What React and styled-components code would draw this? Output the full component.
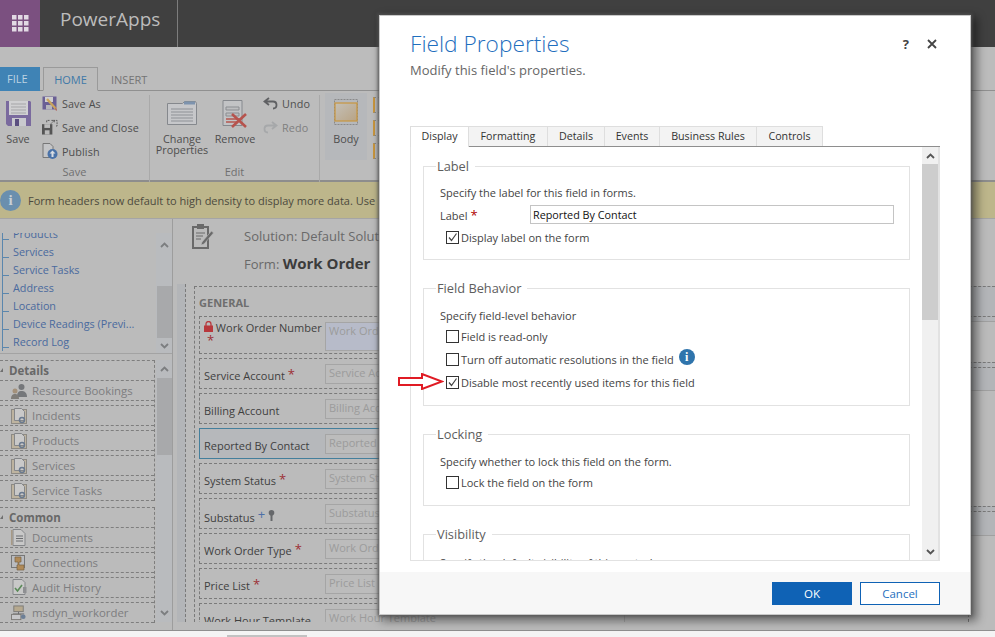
import React from "react";
import styled, { createGlobalStyle } from "styled-components";

const FONT = `"Open Sans", "Noto Sans", "Liberation Sans", sans-serif`;

const GlobalStyle = createGlobalStyle`
  html, body { margin: 0; padding: 0; height: 100%; overflow: hidden; background: #f4f4f4; }
  body { font-family: ${FONT}; }
  * { box-sizing: border-box; }
`;

/* ---------- icons ---------- */
const WaffleIcon = () => (
  <svg width="17" height="17" viewBox="0 0 17 17" fill="#e2d9e4">
    {[0, 6, 12].map((y) =>
      [0, 6, 12].map((x) => <rect key={`${x}-${y}`} x={x} y={y} width="4.5" height="4.5" />)
    )}
  </svg>
);
const SaveIcon = () => (
  <svg width="27" height="27" viewBox="0 0 27 27">
    <path d="M1 1h24l1 1v24H3l-2-2z" fill="#7a6a9e" />
    <rect x="4" y="1" width="19" height="14" fill="#d0d0d2" />
    <path d="M6 4h15M6 7h15M6 10h15M6 13h15" stroke="#a5a5a8" />
    <rect x="7" y="18" width="14" height="8" fill="#c9c9ce" />
    <rect x="10" y="19" width="4" height="7" fill="#5b4f80" />
  </svg>
);
const SaveAsIcon = () => (
  <svg width="16" height="15" viewBox="0 0 16 15">
    <rect x="0.5" y="0.5" width="14" height="13" fill="#6a5f95" />
    <rect x="3" y="1" width="8" height="5" fill="#cfcfcf" />
    <rect x="4" y="9" width="6" height="4.5" fill="#b5b5bb" />
    <path d="M5 3l9 10" stroke="#c9a35e" strokeWidth="2.4" />
    <path d="M13 11l2 3-1 1z" fill="#b0524c" />
  </svg>
);
const SaveCloseIcon = () => (
  <svg width="17" height="16" viewBox="0 0 17 16">
    <path d="M0 5h11v11H0z" fill="#555" />
    <rect x="2.5" y="5" width="6" height="4" fill="#bbb" />
    <rect x="3" y="11.5" width="5" height="4.5" fill="#bbb" />
    <path d="M5 3V1h3M12 1h4v6h-2M9.5 4.5l3-3M10 1h3v3" fill="none" stroke="#555" strokeDasharray="2 1" />
  </svg>
);
const PublishIcon = () => (
  <svg width="16" height="16" viewBox="0 0 16 16">
    <path d="M1 .5h7l3 3v11H1z" fill="#c4c5c7" stroke="#777" />
    <circle cx="10.5" cy="11" r="5" fill="#4a72a8" />
    <path d="M10.5 7.5l3 3h-2V14h-2v-3.500h-2z" fill="#d9dde2" />
  </svg>
);
const ChangeIcon = () => (
  <svg width="30" height="26" viewBox="0 0 30 26">
    <path d="M.5 3.500h15l2-2h11l1 2v21H.5z" fill="#c6c7ca" stroke="#85888d" />
    <rect x="17" y="1.500" width="11" height="3" fill="#7d93ae" />
    <path d="M4 9h22M4 12h22M4 15h22M4 18h22M4 21h22" stroke="#8e9196" />
  </svg>
);
const RemoveIcon = () => (
  <svg width="26" height="28" viewBox="0 0 26 28">
    <path d="M1 .5h19v25H1z" fill="#c2c3c5" stroke="#85888d" />
    <path d="M4 7h13v3H4zM4 13h13v3H4z" fill="#bdbec0" stroke="#8b8d91" />
    <path d="M4 19h16" stroke="#b8716c" strokeWidth="2" />
    <path d="M4 22h12" stroke="#b8716c" strokeWidth="2" />
    <path d="M10 14l14 13M24 14L10 27" stroke="#b6534d" strokeWidth="2.6" />
  </svg>
);
const ArrowBack = ({ redo }) => (
  <svg width="15" height="13" viewBox="0 0 15 13" style={redo ? { transform: "scaleX(-1)" } : undefined}>
    <path d="M6 1L1.500 4.500 6 8M2 4.500h8c2.500 0 3.500 2 3.500 3.500S12.500 11.500 10 11.500" fill="none" stroke={redo ? "#a6a8aa" : "#5f6063"} strokeWidth="1.800" />
  </svg>
);
const BodyIcon = () => (
  <svg width="24" height="26" viewBox="0 0 24 26">
    <rect x=".5" y=".5" width="23" height="25" fill="none" stroke="#8a8a8a" strokeDasharray="2 1" />
    <defs>
      <linearGradient id="bodyfill" x1="0" y1="0" x2="1" y2="1">
        <stop offset="0" stopColor="#c4c0b8" />
        <stop offset="1" stopColor="#b8a384" />
      </linearGradient>
    </defs>
    <rect x="1" y="4" width="22" height="18" fill="url(#bodyfill)" stroke="#c8963f" strokeWidth="1.200" />
  </svg>
);
const ClipboardIcon = () => (
  <svg width="22" height="26" viewBox="0 0 22 26">
    <path d="M1 4h15v21H1z" fill="none" stroke="#6a6a6a" strokeWidth="2" />
    <rect x="5" y="1" width="7" height="5" fill="#6a6a6a" />
    <path d="M4 10h9M4 13h7M4 16h5" stroke="#6a6a6a" />
    <path d="M19.500 8L10 19l-1 3 3-1 9.500-11z" fill="#6a6a6a" stroke="#bbb" strokeWidth=".6" />
  </svg>
);
const PeopleIcon = () => (
  <svg width="16" height="16" viewBox="0 0 16 16">
    <circle cx="10.500" cy="4" r="3" fill="#75777a" />
    <path d="M6 14c0-5 2-6 4.500-6S16 9 16 14z" fill="#75777a" />
    <circle cx="4" cy="8" r="2.500" fill="#a4917a" />
    <path d="M0 16c0-4 2-5 4-5s4 1 4 5z" fill="#807d78" />
  </svg>
);
const PageIcon = () => (
  <svg width="16" height="16" viewBox="0 0 16 16">
    <rect x=".5" y="1.500" width="15" height="14" fill="#bdb39f" stroke="#8d8a84" />
    <path d="M3.500.5h7l3 3v9h-10z" fill="#c9c9c9" stroke="#85878a" />
    <circle cx="11" cy="12" r="2.500" fill="none" stroke="#6a7a8f" strokeWidth="1.500" />
  </svg>
);
const DocIcon = () => (
  <svg width="16" height="17" viewBox="0 0 16 17">
    <path d="M2 .5h8l4 4v12H2z" fill="#c8c8c8" stroke="#85878a" />
    <path d="M5 7h7M5 9.500h7M5 12h7" stroke="#6b6d70" />
    <rect x="0" y="1" width="1.500" height="15" fill="#a79a86" />
  </svg>
);
const ConnIcon = () => (
  <svg width="16" height="16" viewBox="0 0 16 16">
    <rect x=".5" y=".5" width="13" height="12" fill="#b9bbbf" stroke="#777" />
    <path d="M4 2h6v5H8v3h5v5H6v-5h1V7H4z" fill="#b08a58" stroke="#7a6242" strokeWidth=".7" />
  </svg>
);
const AuditIcon = () => (
  <svg width="15" height="17" viewBox="0 0 15 17">
    <path d="M1 .5h9l3 3v12H1z" fill="#c8c8c8" stroke="#85878a" />
    <path d="M3 9l2.500 3L10 6" fill="none" stroke="#5a8a58" strokeWidth="1.600" />
    <rect x="11" y="8" width="3.500" height="6" fill="#8e8f92" />
  </svg>
);
const EntityIcon = () => (
  <svg width="17" height="16" viewBox="0 0 17 16">
    <rect x="3" y=".5" width="10" height="6" fill="#b6a98f" stroke="#7c7a76" />
    <path d="M8 7v2M2 9h12" stroke="#66686c" />
    <rect x=".5" y="9.500" width="10" height="5.500" fill="#c6c6c8" stroke="#7c7a76" />
    <circle cx="13" cy="12" r="2.500" fill="#6d7f96" />
  </svg>
);
const LockIcon = () => (
  <svg width="9" height="11" viewBox="0 0 9 11">
    <rect y="4.500" width="9" height="6.500" fill="#b8383c" />
    <path d="M2 5V3a2.500 2.500 0 0 1 5 0v2" fill="none" stroke="#b8383c" strokeWidth="1.300" />
  </svg>
);
const KeyIcon = () => (
  <svg width="7" height="12" viewBox="0 0 7 12">
    <circle cx="3.500" cy="2.800" r="2.800" fill="#66686b" />
    <path d="M2.500 5h2v6h-2z" fill="#66686b" />
  </svg>
);
const Chevron = ({ down, color = "#7c7e80" }) => (
  <svg width="9" height="6" viewBox="0 0 9 6" style={down ? { transform: "scaleY(-1)" } : undefined}>
    <path d="M1 5l3.500-3.500L8 5" fill="none" stroke={color} strokeWidth="1.800" />
  </svg>
);
const CheckMark = () => (
  <svg width="11" height="11" viewBox="0 0 11 11">
    <path d="M2 5.500l2.500 3L9.500 1.500" fill="none" stroke="#444" strokeWidth="1.200" />
  </svg>
);

/* ---------- page ---------- */
const Page = styled.div`
  position: relative;
  width: 995px;
  height: 637px;
  overflow: hidden;
  display: flex;
  flex-direction: column;
  background: #bbbbbb;
`;

const TopBar = styled.header`
  height: 47px;
  background: #404040;
  display: flex;
  flex: none;
`;
const AppTile = styled.div`
  width: 40px;
  background: #7b5080;
  display: flex;
  align-items: center;
  justify-content: center;
`;
const AppName = styled.div`
  width: 138px;
  padding: 6px 0 0 20px;
  border-right: 1px solid #7d7d7d;
  color: #bcbcbc;
  font-size: 19px;
  line-height: 27px;
`;

const Ribbon = styled.section`
  height: 135px;
  flex: none;
  background: #bcbcbc;
  border-bottom: 2px solid #8d8d8d;
  display: flex;
  flex-direction: column;
  padding-top: 20px;
`;
const TabStrip = styled.div`
  height: 24px;
  flex: none;
  display: flex;
  border-bottom: 1px solid #909090;
  font-size: 11px;
`;
const FileTab = styled.div`
  width: 40px;
  height: 24px;
  background: #3f83b5;
  color: #bcd3e3;
  padding-left: 7px;
  line-height: 24px;
`;
const HomeTab = styled.div`
  width: 55px;
  height: 24px;
  margin-left: 3px;
  border: 1px solid #9a9a9a;
  border-bottom: 1px solid #bcbcbc;
  color: #3f79a8;
  text-align: center;
  line-height: 24px;
`;
const InsertTab = styled.div`
  margin-left: 13px;
  color: #747474;
  line-height: 26px;
`;
const Groups = styled.div`
  flex: 1;
  display: flex;
  padding-top: 1px;
`;
const Group = styled.div`
  width: ${(p) => p.$w}px;
  flex: none;
  display: flex;
  flex-direction: column;
  border-right: 1px solid #a9a9a9;
  margin-top: 3px;
`;
const GroupBody = styled.div`
  flex: 1;
  display: flex;
  margin-top: -4px;
`;
const GroupLabel = styled.div`
  height: 19px;
  text-align: center;
  font-size: 11px;
  line-height: 17px;
  color: #707070;
`;
const LargeButton = styled.div`
  width: ${(p) => p.$w}px;
  flex: none;
  display: flex;
  flex-direction: column;
  align-items: center;
  padding-top: 9px;
  font-size: 10.800px;
  line-height: 11px;
  text-align: center;
  color: #4e4e4e;
`;
const LargeIconBox = styled.div`
  height: 33px;
  flex: none;
  display: flex;
  align-items: flex-start;
  justify-content: center;
`;
const SmallStack = styled.div`
  display: flex;
  flex-direction: column;
  margin-left: ${(p) => p.$ml}px;
`;
const SmallButton = styled.div`
  height: 24px;
  display: flex;
  align-items: center;
  gap: 4px;
  font-size: 10.800px;
  letter-spacing: 0.1px;
  color: ${(p) => (p.$off ? "#7f7f7f" : "#4e4e4e")};
`;
const SmallIconBox = styled.span`
  width: 16px;
  display: flex;
  justify-content: center;
`;
const BodyButton = styled(LargeButton)`
  margin: 1px 0 0 5px;
  height: 67px;
  background: #b6b8bb;
  padding-top: 6px;
`;
const BodyCaption = styled.span`
  margin-top: 1px;
`;
const ClippedIcons = styled.div`
  flex: 1;
  display: flex;
  flex-direction: column;
  gap: 7px;
  padding: 5px 0 0 6px;
`;
const ClippedIcon = styled.span`
  display: block;
  width: 14px;
  height: 16px;
  border: 1px dashed #8a8a8a;
  border-left: 2px solid #c8963f;
`;

const Notice = styled.div`
  height: 37px;
  flex: none;
  background: #bdb68b;
  border-bottom: 1px solid #a5a5a5;
  display: flex;
  align-items: center;
  gap: 7px;
  font-size: 11px;
  color: #4c4a3e;
  white-space: nowrap;
`;
const NoticeIcon = styled.span`
  width: 21px;
  height: 21px;
  border-radius: 50%;
  background: #6a8fae;
  color: #c6d0d6;
  font: bold 15px/21px "Liberation Serif", serif;
  text-align: center;
  flex: none;
`;

const Workspace = styled.div`
  flex: 1;
  display: flex;
  min-height: 0;
`;
const Sidebar = styled.nav`
  width: 173px;
  flex: none;
  border-right: 1px solid #9d9d9d;
  display: flex;
  flex-direction: column;
`;
const TreeArea = styled.div`
  height: 121px;
  flex: none;
  margin-top: 14px;
  border-bottom: 1px solid #a3a3a3;
  display: flex;
  overflow: hidden;
`;
const Tree = styled.ul`
  width: 156px;
  margin: -8px 0 0;
  list-style: none;
  padding: 0 0 0 2px;
`;
const TreeItem = styled.li`
  height: 18px;
  padding-left: 10px;
  font-size: 10.800px;
  line-height: 18px;
  color: #4a6a9e;
  border-left: 1px solid #5a86ad;
  position: relative;
  white-space: nowrap;
  &::before {
    content: "";
    position: absolute;
    left: 0;
    top: 14px;
    width: 6px;
    height: 1px;
    background: #5a86ad;
  }
`;
const ScrollBar = styled.div`
  width: 16px;
  flex: none;
  background: #b9bbbe;
  display: flex;
  flex-direction: column;
  align-items: center;
  margin-left: ${(p) => p.$ml || 0}px;
`;
const ScrollButton = styled.div`
  height: ${(p) => p.$h}px;
  flex: none;
  display: flex;
  align-items: ${(p) => (p.$end ? "flex-end" : "center")};
  padding-bottom: ${(p) => (p.$end ? 5 : 0)}px;
`;
const ScrollThumb = styled.div`
  width: 15px;
  height: ${(p) => p.$h}px;
  margin-top: ${(p) => p.$mt || 0}px;
  flex: none;
  background: #a8a9ab;
`;
const ScrollRest = styled.div`
  flex: 1;
`;
const Sections = styled.div`
  flex: 1;
  display: flex;
  min-height: 0;
  margin-top: 6px;
  padding-bottom: 8px;
`;
const SectionColumn = styled.div`
  width: 155px;
  flex: none;
  display: flex;
  flex-direction: column;
  gap: 6px;
`;
const NavGroup = styled.div`
  border: 1px dashed #7e7e7e;
  border-left: 0;
  border-bottom: 0;
  display: flex;
  flex-direction: column;
  gap: 4px;
`;
const NavHeader = styled.div`
  height: 19px;
  padding-left: 9px;
  font-size: 11.500px;
  font-weight: 700;
  line-height: 19px;
  color: #686868;
  position: relative;
  margin-bottom: -4px;
  &::before {
    content: "";
    position: absolute;
    left: 0;
    top: 7px;
    border-style: solid;
    border-width: 0 0 4px 3px;
    border-color: transparent transparent #6f6f6f transparent;
  }
`;
const NavEntry = styled.div`
  height: 21px;
  border-top: 1px dashed #7e7e7e;
  border-bottom: 1px dashed #7e7e7e;
  display: flex;
  align-items: center;
  gap: 5px;
  padding-left: 11px;
  font-size: 11.400px;
  color: #7d7d7f;
  white-space: nowrap;
`;
const NavIcon = styled.span`
  width: 16px;
  height: 17px;
  display: flex;
  align-items: center;
  justify-content: center;
  flex: none;
`;

const Main = styled.main`
  flex: 1;
  display: flex;
  flex-direction: column;
  min-width: 0;
`;
const FormTitle = styled.div`
  height: 65px;
  flex: none;
  display: flex;
  padding: 4px 0 0 19px;
`;
const FormTitleText = styled.div`
  margin-left: 30px;
  margin-top: -1px;
  color: #696969;
  font-size: 13px;
  line-height: 28px;
  white-space: nowrap;
`;
const FormName = styled.b`
  color: #3c3c3c;
  font-size: 15px;
  font-weight: 700;
  line-height: 1;
`;
const FormBody = styled.div`
  flex: 1;
  display: flex;
  min-height: 0;
  padding: 0 0 8px 4px;
`;
const Gutter = styled.div`
  width: 9px;
  flex: none;
  background: #b3b5b8;
  border-right: 1px dashed #7a7a7a;
`;
const FormSection = styled.div`
  width: 775px;
  flex: none;
  margin: 2px 0 0 8px;
  overflow: hidden;
  padding: 0 0 0 4px;
  border: 1px dashed #7a7a7a;
  border-bottom: 0;
`;
const SectionTitle = styled.div`
  height: 29px;
  font-size: 11px;
  font-weight: 700;
  line-height: 32px;
  color: #6e6e6e;
`;
const FieldRow = styled.div`
  height: ${(p) => p.$h || 31}px;
  margin-bottom: 4px;
  display: flex;
  padding: 3px 0 0 4px;
  border: 1px ${(p) => (p.$active ? "solid #447f9c" : "dashed #7a7a7a")};
  background: ${(p) => (p.$active ? "#b6b8bb" : "transparent")};
  border-right: 0;
`;
const FieldLabel = styled.div`
  width: 121px;
  flex: none;
  font-size: 11px;
  line-height: 14px;
  color: #3f3f3f;
  padding-top: ${(p) => (p.$tall ? 1 : 7)}px;
`;
const Required = styled.span`
  color: #9d2f35;
  font-size: 13px;
  line-height: 10px;
  margin-left: 3px;
  vertical-align: 1px;
`;
const Recommended = styled(Required)`
  color: #4c6fa8;
  vertical-align: 3px;
`;
const FieldInput = styled.div`
  width: 300px;
  height: ${(p) => p.$h || 20}px;
  margin-top: 2px;
  padding-left: 3px;
  font-size: 11px;
  line-height: 15px;
  color: #9b9b9b;
  background: ${(p) => p.$bg || "#bcbcbc"};
  border: 1px solid #a5a5a5;
`;
const SideColumn = styled.div`
  flex: 1;
  display: flex;
  flex-direction: column;
`;
const SideBand = styled.div`
  height: ${(p) => p.$h}px;
  margin-top: ${(p) => p.$mt}px;
  flex: none;
  background: #b3b5b8;
  border-top: 1px dashed #7a7a7a;
  border-bottom: 1px solid #a0a0a0;
  position: relative;
  &::after {
    content: "";
    position: absolute;
    left: 0;
    right: 0;
    top: ${(p) => p.$inner}px;
    border-top: 1px dashed #7a7a7a;
  }
`;

const StatusBar = styled.footer`
  height: 7px;
  flex: none;
  background: #f4f4f4;
  border-top: 1px solid #8f8f8f;
  padding: 4px 0 0 227px;
`;
const StatusThumb = styled.div`
  width: 80px;
  height: 2px;
  background: #c2c2c2;
`;

/* ---------- dialog ---------- */
const Dialog = styled.div`
  position: absolute;
  left: 379px;
  top: 15px;
  width: 592px;
  height: 600px;
  background: #fff;
  border: 1px solid #c8c8c8;
  box-shadow: 0 0 3px 1px #555, 4px 4px 9px 2px rgba(0, 0, 0, 0.45);
  display: flex;
  flex-direction: column;
`;
const DialogHead = styled.div`
  height: 110px;
  flex: none;
  padding: 11px 33px 0 30px;
  display: flex;
  justify-content: space-between;
`;
const DialogTitle = styled.h1`
  margin: 0;
  font-size: 22.700px;
  font-weight: 300;
  line-height: 34px;
  color: #1f6fbe;
`;
const DialogSub = styled.div`
  font-size: 13px;
  line-height: 18px;
  color: #666;
`;
const HeadTools = styled.div`
  display: flex;
  gap: 18px;
  height: 34px;
  align-items: center;
  color: #444;
  font-size: 13px;
  font-weight: 700;
`;
const Tabs = styled.div`
  height: 21px;
  flex: none;
  margin: 0 30px;
  display: flex;
  border-bottom: 1px solid #8e8e8e;
`;
const Tab = styled.div`
  height: ${(p) => (p.$on ? 21 : 20)}px;
  padding: 0 8px;
  width: ${(p) => p.$w}px;
  text-align: center;
  font-size: 10.700px;
  line-height: 19px;
  color: #333;
  white-space: nowrap;
  background: ${(p) => (p.$on ? "#fff" : "#f3f3f3")};
  border: 1px solid #dedede;
  border-bottom: 0;
  border-left-width: ${(p) => (p.$on ? 1 : 0)}px;
`;
const TabPanel = styled.div`
  height: 414px;
  flex: none;
  margin: 0 30px;
  display: flex;
  overflow: hidden;
  border: 2px solid #e2e2e2;
  border-width: 0 2px 1px 1px;
`;
const PanelScroll = styled.div`
  flex: 1;
  padding: 11px 12px 0 12px;
  overflow: hidden;
`;
const Fields = styled.fieldset`
  margin: 0 0 20px;
  padding: ${(p) => p.$pt || 11}px 15px 0 16px;
  height: ${(p) => p.$h}px;
  border: 1px solid #e2e2e2;
  min-width: 0;
`;
const Legend = styled.legend`
  margin-left: -4px;
  padding: 0 6px 0 1px;
  font-size: 12.800px;
  line-height: 16px;
  color: #5d5d5d;
`;
const Hint = styled.div`
  margin-bottom: 1px;
  font-size: 11px;
  line-height: 16px;
  color: #444;
  white-space: nowrap;
`;
const LabelRow = styled.div`
  display: flex;
  align-items: center;
  height: 19px;
  margin: 4px 0 2px;
  font-size: 11px;
  color: #444;
`;
const LabelName = styled.div`
  width: 90px;
  flex: none;
`;
const TextValue = styled.div`
  width: 364px;
  height: 19px;
  padding-left: 2px;
  border: 1px solid #c4c4c4;
  color: #111;
  font-size: 10.800px;
  line-height: 17px;
`;
const Star = styled.span`
  color: #b00000;
  font-size: 13px;
  margin-left: 3px;
`;
const CheckRow = styled.div`
  height: 23px;
  display: flex;
  align-items: center;
  padding-left: 6px;
  gap: 2px;
  font-size: 11px;
  color: #444;
  white-space: nowrap;
`;
const Box = styled.span`
  width: 13px;
  height: 13px;
  flex: none;
  border: 1px solid #333;
  display: flex;
  align-items: center;
  justify-content: center;
  background: #fff;
`;
const InfoDot = styled.span`
  width: 16px;
  height: 16px;
  margin: -6px 0 0 3px;
  border-radius: 50%;
  background: #2f74ac;
  color: #fff;
  font: bold 12px/16px "Liberation Serif", serif;
  text-align: center;
`;
const Marker = styled.svg`
  position: absolute;
  left: 18px;
  top: 357px;
`;
const PanelBar = styled.div`
  width: 16px;
  flex: none;
  background: #f0f0f0;
  display: flex;
  flex-direction: column;
  align-items: center;
`;
const PanelThumb = styled.div`
  width: 100%;
  height: 156px;
  flex: none;
  background: #cdcdcd;
`;
const DialogFoot = styled.div`
  margin-top: 11px;
  flex: 1;
  background: #f7f7f7;
  display: flex;
  justify-content: flex-end;
  gap: 8px;
  padding: 10px 30px 0 0;
`;
const DialogButton = styled.button`
  width: 80px;
  height: 23px;
  padding: 0;
  font-family: ${FONT};
  font-size: 11.500px;
  color: ${(p) => (p.$primary ? "#fff" : "#1f6fbe")};
  background: ${(p) => (p.$primary ? "#0f62b5" : "#fff")};
  border: 1px solid #0f62b5;
`;

const Check = ({ checked, children }) => (
  <CheckRow>
    <Box>{checked && <CheckMark />}</Box>
    {children}
  </CheckRow>
);

const treeItems = ["Products", "Services", "Service Tasks", "Address", "Location", "Device Readings (Previ...", "Record Log"];
const detailItems = [
  ["Resource Bookings", <PeopleIcon />],
  ["Incidents", <PageIcon />],
  ["Products", <PageIcon />],
  ["Services", <PageIcon />],
  ["Service Tasks", <PageIcon />],
];
const commonItems = [
  ["Documents", <DocIcon />],
  ["Connections", <ConnIcon />],
  ["Audit History", <AuditIcon />],
  ["msdyn_workorder", <EntityIcon />],
];

export default function App() {
  return (
    <Page>
      <GlobalStyle />
      <TopBar>
        <AppTile><WaffleIcon /></AppTile>
        <AppName>PowerApps</AppName>
      </TopBar>

      <Ribbon>
        <TabStrip>
          <FileTab>FILE</FileTab>
          <HomeTab>HOME</HomeTab>
          <InsertTab>INSERT</InsertTab>
        </TabStrip>
        <Groups>
          <Group $w={150}>
            <GroupBody>
              <LargeButton $w={36}>
                <LargeIconBox><SaveIcon /></LargeIconBox>
                Save
              </LargeButton>
              <SmallStack $ml={6}>
                <SmallButton><SmallIconBox><SaveAsIcon /></SmallIconBox>Save As</SmallButton>
                <SmallButton><SmallIconBox><SaveCloseIcon /></SmallIconBox>Save and Close</SmallButton>
                <SmallButton><SmallIconBox><PublishIcon /></SmallIconBox>Publish</SmallButton>
              </SmallStack>
            </GroupBody>
            <GroupLabel>Save</GroupLabel>
          </Group>
          <Group $w={170}>
            <GroupBody>
              <LargeButton $w={64}>
                <LargeIconBox><ChangeIcon /></LargeIconBox>
                Change Properties
              </LargeButton>
              <LargeButton $w={42}>
                <LargeIconBox><RemoveIcon /></LargeIconBox>
                Remove
              </LargeButton>
              <SmallStack $ml={6}>
                <SmallButton><SmallIconBox><ArrowBack /></SmallIconBox>Undo</SmallButton>
                <SmallButton $off><SmallIconBox><ArrowBack redo /></SmallIconBox>Redo</SmallButton>
              </SmallStack>
            </GroupBody>
            <GroupLabel>Edit</GroupLabel>
          </Group>
          <BodyButton $w={42}>
            <LargeIconBox><BodyIcon /></LargeIconBox>
            <BodyCaption>Body</BodyCaption>
          </BodyButton>
          <ClippedIcons>
            <ClippedIcon />
            <ClippedIcon />
            <ClippedIcon />
          </ClippedIcons>
        </Groups>
      </Ribbon>

      <Notice>
        <NoticeIcon>i</NoticeIcon>
        Form headers now default to high density to display more data. Use
      </Notice>

      <Workspace>
        <Sidebar>
          <TreeArea>
            <Tree>
              {treeItems.map((t) => <TreeItem key={t}>{t}</TreeItem>)}
            </Tree>
            <ScrollBar>
              <ScrollButton $h={23}><Chevron /></ScrollButton>
              <ScrollThumb $mt={30} $h={52} />
              <ScrollRest />
              <ScrollButton $h={14}><Chevron down /></ScrollButton>
            </ScrollBar>
          </TreeArea>
          <Sections>
            <SectionColumn>
              <NavGroup>
                <NavHeader>Details</NavHeader>
                {detailItems.map(([t, icon]) => (
                  <NavEntry key={t}><NavIcon>{icon}</NavIcon>{t}</NavEntry>
                ))}
              </NavGroup>
              <NavGroup>
                <NavHeader>Common</NavHeader>
                {commonItems.map(([t, icon]) => (
                  <NavEntry key={t}><NavIcon>{icon}</NavIcon>{t}</NavEntry>
                ))}
              </NavGroup>
            </SectionColumn>
            <ScrollBar $ml={1}>
              <ScrollButton $h={18}><Chevron /></ScrollButton>
              <ScrollThumb $h={77} />
              <ScrollRest />
              <ScrollButton $h={18}><Chevron down /></ScrollButton>
            </ScrollBar>
          </Sections>
        </Sidebar>

        <Main>
          <FormTitle>
            <ClipboardIcon />
            <FormTitleText>
              Solution: Default Solution<br />
              Form: <FormName>Work Order</FormName>
            </FormTitleText>
          </FormTitle>
          <FormBody>
            <Gutter />
            <FormSection>
              <SectionTitle>GENERAL</SectionTitle>
              <FieldRow $h={38}>
                <FieldLabel $tall><LockIcon /> Work Order Number<br /><Required>*</Required></FieldLabel>
                <FieldInput $h={29} $bg="#b7bbc9">Work Order</FieldInput>
              </FieldRow>
              <FieldRow>
                <FieldLabel>Service Account<Required>*</Required></FieldLabel>
                <FieldInput>Service Account</FieldInput>
              </FieldRow>
              <FieldRow>
                <FieldLabel>Billing Account</FieldLabel>
                <FieldInput>Billing Account</FieldInput>
              </FieldRow>
              <FieldRow $active>
                <FieldLabel>Reported By Contact</FieldLabel>
                <FieldInput>Reported By Contact</FieldInput>
              </FieldRow>
              <FieldRow>
                <FieldLabel>System Status<Required>*</Required></FieldLabel>
                <FieldInput>System Status</FieldInput>
              </FieldRow>
              <FieldRow>
                <FieldLabel>Substatus<Recommended>+</Recommended> <KeyIcon /></FieldLabel>
                <FieldInput>Substatus</FieldInput>
              </FieldRow>
              <FieldRow>
                <FieldLabel>Work Order Type<Required>*</Required></FieldLabel>
                <FieldInput>Work Order Type</FieldInput>
              </FieldRow>
              <FieldRow>
                <FieldLabel>Price List<Required>*</Required></FieldLabel>
                <FieldInput>Price List</FieldInput>
              </FieldRow>
              <FieldRow>
                <FieldLabel>Work Hour Template</FieldLabel>
                <FieldInput>Work Hour Template</FieldInput>
              </FieldRow>
            </FormSection>
            <SideColumn>
              <SideBand $mt={2} $h={36} $inner={29} />
              <SideBand $mt={40} $h={29} $inner={4} />
              <SideBand $mt={115} $h={30} $inner={4} />
            </SideColumn>
          </FormBody>
        </Main>
      </Workspace>

      <StatusBar><StatusThumb /></StatusBar>

      <Dialog>
        <DialogHead>
          <div>
            <DialogTitle>Field Properties</DialogTitle>
            <DialogSub>Modify this field's properties.</DialogSub>
          </div>
          <HeadTools>
            <span>?</span>
            <svg width="10" height="10" viewBox="0 0 10 10">
              <path d="M1 1l8 8M9 1L1 9" stroke="#444" strokeWidth="1.800" />
            </svg>
          </HeadTools>
        </DialogHead>

        <Tabs>
          <Tab $on $w={59}>Display</Tab>
          <Tab $w={79}>Formatting</Tab>
          <Tab $w={57}>Details</Tab>
          <Tab $w={55}>Events</Tab>
          <Tab $w={97}>Business Rules</Tab>
          <Tab $w={66}>Controls</Tab>
        </Tabs>
        <TabPanel>
          <PanelScroll>
            <Fields $h={102}>
              <Legend>Label</Legend>
              <Hint>Specify the label for this field in forms.</Hint>
              <LabelRow>
                <LabelName>Label<Star>*</Star></LabelName>
                <TextValue>Reported By Contact</TextValue>
              </LabelRow>
              <Check checked>Display label on the form</Check>
            </Fields>
            <Fields $h={126} $pt={12}>
              <Legend>Field Behavior</Legend>
              <Hint>Specify field-level behavior</Hint>
              <Check>Field is read-only</Check>
              <Check>Turn off automatic resolutions in the field<InfoDot>i</InfoDot></Check>
              <Check checked>Disable most recently used items for this field</Check>
            </Fields>
            <Fields $h={80} $pt={12}>
              <Legend>Locking</Legend>
              <Hint>Specify whether to lock this field on the form.</Hint>
              <Check>Lock the field on the form</Check>
            </Fields>
            <Fields $h={60} $pt={13}>
              <Legend>Visibility</Legend>
              <Hint>Specify the default visibility of this control.</Hint>
            </Fields>
          </PanelScroll>
          <PanelBar>
            <ScrollButton $h={17}><Chevron color="#555" /></ScrollButton>
            <PanelThumb />
            <ScrollRest />
            <ScrollButton $h={16} $end><Chevron down color="#555" /></ScrollButton>
          </PanelBar>
        </TabPanel>
        <DialogFoot>
          <DialogButton $primary>OK</DialogButton>
          <DialogButton>Cancel</DialogButton>
        </DialogFoot>
        <Marker width="46" height="17" viewBox="0 0 46 17">
          <path d="M1 5h23V1l20 7.500L24 16v-4H1z" fill="#fff" stroke="#e01b24" strokeWidth="2" />
        </Marker>
      </Dialog>
    </Page>
  );
}
